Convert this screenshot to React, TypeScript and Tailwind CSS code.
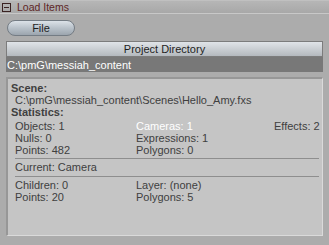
export default function App() {
  const font = { fontFamily: '"Liberation Sans", Arial, sans-serif' };
  return (
    <div
      className="w-[329px] h-[245px] bg-[#acacac] overflow-hidden text-[11px] leading-[12px] text-[#404040]"
      style={font}
    >
      {/* Header */}
      <div className="h-[14px] flex items-center pl-[2px] bg-gradient-to-b from-[#b6b6b6] to-[#a8a8a8] border-t border-[#c0c0c0] border-b border-b-[#c8c8c8]">
        <div className="w-[9px] h-[9px] border border-[#3a2222] flex items-center justify-center">
          <div className="w-[5px] h-px bg-[#3a2222]" />
        </div>
        <span className="ml-[6px] text-[10.5px] leading-[12px] text-[#5e2626]">Load Items</span>
      </div>

      <div className="px-[6px]">
        {/* File button */}
        <div className="ml-[1px] mt-[6px] h-[16px] w-[68px] rounded-full border border-[#747c84] bg-gradient-to-b from-[#dce2e8] via-[#b9c2ca] to-[#9ca5ae] flex items-center justify-center text-[11px] text-[#1e1e1e]">
          File
        </div>

        {/* Project Directory */}
        <div className="mt-[5px] h-[16px] border border-[#7c7c7c] bg-gradient-to-b from-[#e0e4e8] to-[#b4b9be] flex items-center justify-center text-[11px] text-[#1e1e1e]">
          Project Directory
        </div>
        <div className="h-[15px] bg-[#787878] flex items-center pl-[1px] text-[11px] text-white">
          C:\pmG\messiah_content
        </div>

        {/* Info panel */}
        <div className="mt-[5px] h-[159px] bg-[#c5c5c5] border-t-2 border-l-2 border-[#979797] border-r border-b border-r-[#dadada] border-b-[#dadada] pl-[3px] pt-[3px]">
          <div className="font-bold">Scene:</div>
          <div className="pl-[4px]">C:\pmG\messiah_content\Scenes\Hello_Amy.fxs</div>
          <div className="font-bold">Statistics:</div>
          <div className="pl-[4px] pr-[1px] mt-[2px] grid grid-cols-[121px_138px_1fr]">
            <div>Objects: 1</div>
            <div className="text-white">Cameras: 1</div>
            <div>Effects: 2</div>
            <div>Nulls: 0</div>
            <div>Expressions: 1</div>
            <div />
            <div>Points: 482</div>
            <div>Polygons: 0</div>
            <div />
          </div>
          <div className="ml-[4px] mr-[3px] mt-[2px] h-px bg-[#8e8e8e]" />
          <div className="pl-[4px] mt-[2px]">Current: Camera</div>
          <div className="ml-[4px] mr-[3px] mt-[3px] h-px bg-[#8e8e8e]" />
          <div className="pl-[4px] mt-[2px] grid grid-cols-[121px_1fr]">
            <div>Children: 0</div>
            <div>Layer: (none)</div>
            <div>Points: 20</div>
            <div>Polygons: 5</div>
          </div>
        </div>
      </div>
    </div>
  );
}
